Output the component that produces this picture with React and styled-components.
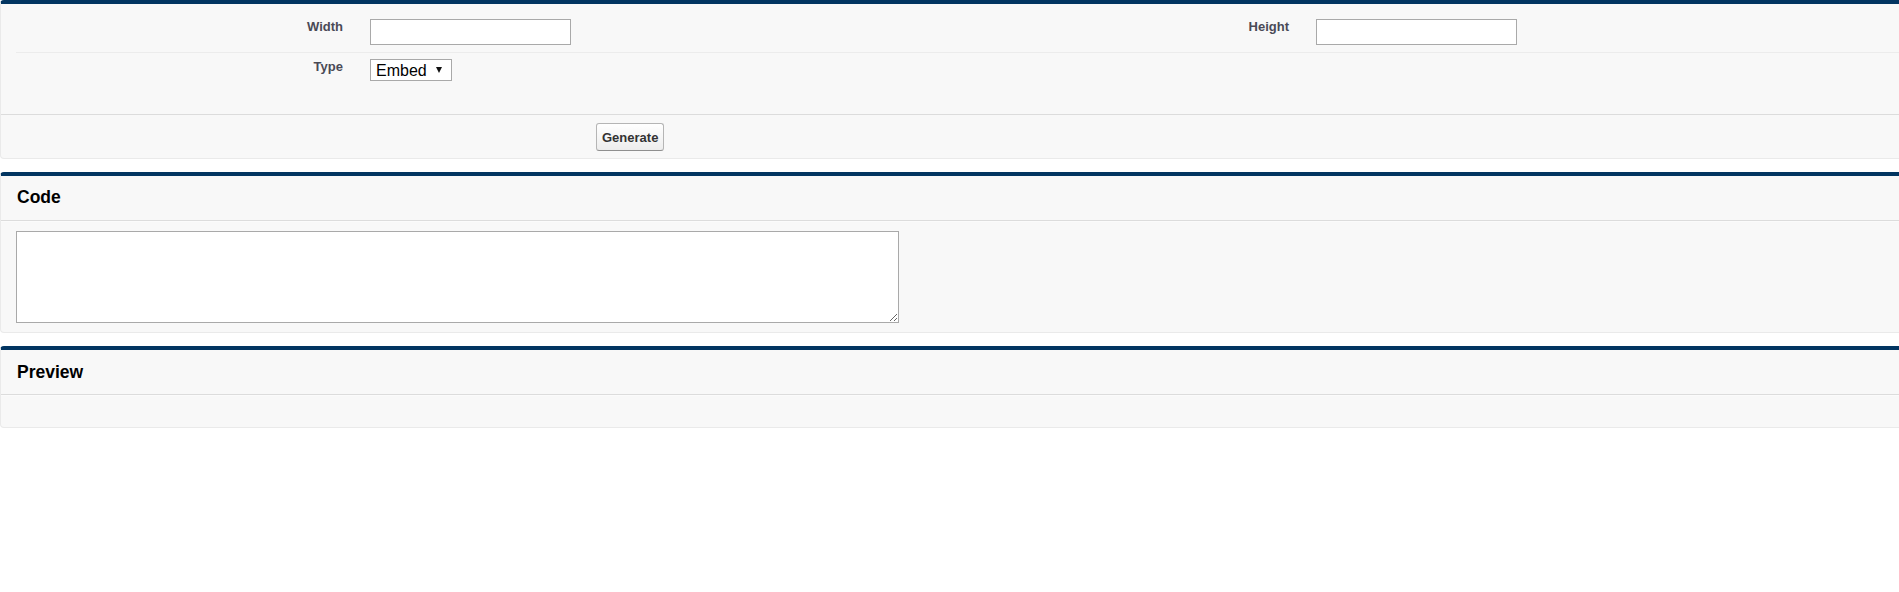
import React from "react";
import styled, { createGlobalStyle } from "styled-components";

const Global = createGlobalStyle`
  html, body { margin: 0; padding: 0; background: #ffffff; overflow: hidden; }
  body { font-family: "Liberation Sans", Arial, sans-serif; }
  * { box-sizing: border-box; }
`;

const Page = styled.div`
  display: flex;
  flex-direction: column;
  gap: 13px;
  width: 100%;
`;

const Block = styled.section`
  background: #f8f8f8;
  border: 1px solid #eaeaea;
  border-top: 4px solid #023561;
  border-right: none;
  border-radius: 4px 0 0 4px;
`;

const FormBody = styled.div`
  padding: 9px 0 26px 15px;
`;

const FieldGrid = styled.div`
  display: grid;
  grid-template-columns: 341px 605px 341px 1fr;
`;

const LabelCell = styled.div`
  padding: 6px 14px 7px 0;
  text-align: right;
  font-size: 13px;
  font-weight: bold;
  line-height: 15px;
  color: #4a4a56;
  border-bottom: ${(p) => (p.$last ? "none" : "1px solid #ececec")};
`;

const DataCell = styled.div`
  padding: 6px 0 7px 13px;
  border-bottom: ${(p) => (p.$last ? "none" : "1px solid #ececec")};
`;

const TextInput = styled.input`
  display: block;
  width: 201px;
  height: 26px;
  border: 1px solid #a9a9a9;
  background: #fff;
  padding: 2px 4px;
  font: 13px "Liberation Sans", Arial, sans-serif;
  outline: none;
`;

const SelectWrap = styled.div`
  position: relative;
  width: 82px;
  height: 22px;
`;

const Select = styled.select`
  appearance: none;
  -webkit-appearance: none;
  width: 82px;
  height: 22px;
  border: 1px solid #a9a9a9;
  border-radius: 0;
  background: #fff;
  color: #000;
  font: 16px "Liberation Sans", Arial, sans-serif;
  padding: 0 0 0 5px;
  outline: none;
`;

const Caret = styled.span`
  position: absolute;
  left: 66px;
  top: 8px;
  width: 0;
  height: 0;
  border-left: 3.5px solid transparent;
  border-right: 3.5px solid transparent;
  border-top: 6px solid #111;
  pointer-events: none;
`;

const Footer = styled.div`
  border-top: 1px solid #dcdcdc;
  padding: 8px 0 7px 595px;
`;

const Button = styled.button`
  height: 28px;
  padding: 0 5px;
  border: 1px solid #b5b5b5;
  border-bottom-color: #8f8f8f;
  border-radius: 3px;
  background: linear-gradient(#ffffff, #ededed);
  color: #333;
  font: bold 13px "Liberation Sans", Arial, sans-serif;
  cursor: pointer;
`;

const Header = styled.div`
  height: ${(p) => p.$h}px;
  padding: ${(p) => p.$pt}px 0 0 16px;
  border-bottom: 1px solid #dcdcdc;
  box-shadow: 0 1px 0 #fbfbfb;
`;

const Title = styled.h2`
  margin: 0;
  font-size: 17.5px;
  line-height: 20px;
  font-weight: bold;
  color: #000;
`;

const Body = styled.div`
  padding: ${(p) => p.$pad || "0"};
  min-height: ${(p) => p.$min || 0}px;
`;

const Code = styled.textarea`
  display: block;
  width: 883px;
  height: 92px;
  border: 1px solid #a9a9a9;
  background: #fff;
  resize: both;
  font: 13px "Liberation Mono", monospace;
  outline: none;
`;

export default function App() {
  return (
    <>
      <Global />
      <Page>
        <Block>
          <FormBody>
            <FieldGrid>
              <LabelCell>Width</LabelCell>
              <DataCell>
                <TextInput type="text" />
              </DataCell>
              <LabelCell>Height</LabelCell>
              <DataCell>
                <TextInput type="text" />
              </DataCell>
              <LabelCell $last>Type</LabelCell>
              <DataCell $last>
                <SelectWrap>
                  <Select defaultValue="embed">
                    <option value="embed">Embed</option>
                    <option value="link">Link</option>
                  </Select>
                  <Caret />
                </SelectWrap>
              </DataCell>
              <LabelCell $last />
              <DataCell $last />
            </FieldGrid>
          </FormBody>
          <Footer>
            <Button type="button">Generate</Button>
          </Footer>
        </Block>

        <Block>
          <Header $h={45} $pt={11}>
            <Title>Code</Title>
          </Header>
          <Body $pad="10px 0 9px 15px">
            <Code />
          </Body>
        </Block>

        <Block>
          <Header $h={45} $pt={12}>
            <Title>Preview</Title>
          </Header>
          <Body $min={32} />
        </Block>
      </Page>
    </>
  );
}
